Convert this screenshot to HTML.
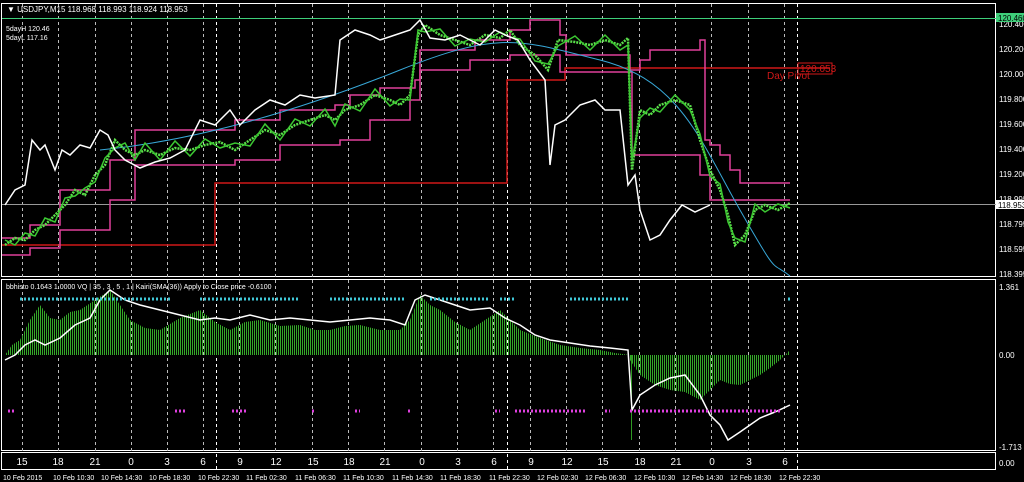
<!DOCTYPE html>
<html><head><meta charset="utf-8"><style>
body{margin:0;background:#000;width:1024px;height:482px;overflow:hidden;font-family:"Liberation Sans",sans-serif}
svg{display:block}
text{font-family:"Liberation Sans",sans-serif}
</style></head><body>
<svg width="1024" height="482" viewBox="0 0 1024 482">
<defs>
<pattern id="st" width="2" height="4" patternUnits="userSpaceOnUse"><rect x="0" y="0" width="1" height="4" fill="#34a828"/></pattern>
</defs>
<rect width="1024" height="482" fill="#000"/>
<rect x="1.5" y="3.5" width="994" height="273" fill="none" stroke="#fff"/>
<rect x="1.5" y="279.5" width="994" height="171" fill="none" stroke="#fff"/>
<rect x="1.5" y="452.5" width="994" height="17" fill="none" stroke="#fff"/>
<g stroke="#bbb" stroke-dasharray="3,3" stroke-width="1">
<path d="M22.5 4V452M58.5 4V452M95.5 4V452M131.5 4V452M167.5 4V452M203.5 4V452M239.5 4V452M275.5 4V452M312.5 4V452M348.5 4V452M384.5 4V452M421.5 4V452M457.5 4V452M493.5 4V452M530.5 4V452M566.5 4V452M602.5 4V452M639.5 4V452M675.5 4V452M711.5 4V452M748.5 4V452M784.5 4V452"/>
</g>
<g stroke="#fff" stroke-dasharray="3,3" stroke-width="1"><path d="M216.5 4V470M507.5 4V470M797.5 4V470"/></g>
<line x1="2" y1="18.5" x2="996" y2="18.5" stroke="#3ecf7a"/>
<line x1="2" y1="204.5" x2="996" y2="204.5" stroke="#999"/>
<path d="M2 245H215V183H507V80H565V68H830" fill="none" stroke="#d01818" stroke-width="1.5"/>
<rect x="798" y="63" width="34" height="11" fill="none" stroke="#d01818"/>
<text x="800" y="72" font-size="10" fill="#d01818">120.053</text>
<text x="767" y="79" font-size="10" fill="#d01818">Day Pivot</text>
<path d="M2 238H30V225H60V190H110V160H135V130H235V120H280V110H335V105H350V95H380V88H415V80H420V50H475V40H510V30H530V20H560V35H566V55H630V70H640V60H650V50H700V40H705V140H710V145H720V155H730V170H740V183H790" fill="none" stroke="#e0409a" stroke-width="1.5"/>
<path d="M2 255H30V248H60V230H110V200H135V165H235V160H280V145H340V140H370V120H410V100H420V70H470V60H510V55H560V72H632V155H700V175H710V200H790" fill="none" stroke="#e0409a" stroke-width="1.5"/>
<path d="M100 150C200 140 300 110 400 70S520 40 600 60S700 140 740 210S770 260 790 276" fill="none" stroke="#38a8d8" stroke-width="1"/>
<path d="M5 245L15 238 25 240 35 230 45 225 55 215 65 205 75 190 85 195 95 175 105 165 115 140 125 150 135 155 145 150 160 155 175 148 190 150 205 145 220 142 235 150 250 140 265 130 280 135 295 125 310 120 325 115 335 120 345 110 360 105 375 95 390 100 400 105 410 95 418 35 425 25 440 35 455 40 470 45 485 35 500 38 510 30 520 45 535 55 548 70 558 40 575 42 590 45 605 40 620 45 628 38 632 170 640 110 650 115 660 105 675 100 690 105 700 140 710 170 720 190 728 215 735 245 745 235 755 210 765 205 778 210 790 203" fill="none" stroke="#5ae04a" stroke-width="2.5" stroke-dasharray="2,1"/>
<path d="M5 240L15 245 25 233 35 236 45 218 55 222 65 198 75 196 85 188 95 182 105 158 115 148 125 143 135 160 145 143 160 160 175 141 190 156 205 139 220 148 235 143 250 146 265 124 280 140 295 119 310 126 325 109 335 126 345 104 360 111 375 89 390 106 400 99 410 100 418 30 425 32 440 29 455 46 470 39 485 42 500 32 510 37 520 39 535 61 548 64 558 46 575 36 590 50 605 35 620 50 628 45 632 160 640 118 650 108 660 112 675 95 690 110 700 134 710 176 720 184 728 222 735 238 745 242 755 204 765 212 778 204 790 208" fill="none" stroke="#3cc832" stroke-width="1.5"/>
<path d="M5 205L15 190 25 185 32 140 40 150 45 145 55 170 62 150 70 155 80 145 90 148 100 130 108 135 115 150 125 160 140 168 155 162 170 158 185 150 200 120 215 125 230 110 240 125 255 110 270 100 285 105 300 95 315 98 335 95 340 40 355 30 370 35 380 40 395 35 410 30 420 20 430 38 445 40 460 35 480 45 495 30 505 35 518 40 530 60 545 80 550 165 555 125 565 120 580 105 595 100 605 110 620 110 628 185 635 175 640 210 650 240 660 235 670 220 682 205 695 212 710 205" fill="none" stroke="#fff" stroke-width="1.5"/>
<text x="7" y="12" font-size="8" fill="#fff">▼ USDJPY,M15  118.968 118.993 118.924 118.953</text>
<text x="6" y="31" font-size="7" fill="#fff">5dayH 120.46</text>
<text x="6" y="40" font-size="7" fill="#fff">5dayL 117.16</text>
<g font-size="8" fill="#fff">
<text x="999" y="27">120.400</text><text x="999" y="52">120.200</text><text x="999" y="77">120.000</text>
<text x="999" y="102">119.800</text><text x="999" y="127">119.600</text><text x="999" y="152">119.400</text>
<text x="999" y="177">119.200</text><text x="999" y="202">118.995</text><text x="999" y="227">118.795</text>
<text x="999" y="252">118.595</text><text x="999" y="277">118.395</text>
<text x="999" y="290">1.361</text><text x="999" y="358">0.00</text><text x="999" y="450">-1.713</text><text x="999" y="466">0.00</text>
</g>
<rect x="996" y="13" width="28" height="9" fill="#3ecf7a"/><text x="998" y="21" font-size="8" fill="#000">120.460</text>
<rect x="996" y="200" width="28" height="9" fill="#fff"/><text x="998" y="208" font-size="8" fill="#000">118.953</text>
<text x="6" y="289" font-size="7" fill="#fff">bbhisto 0.1643 1.0000  VQ | 35 , 3 , 5 , 1  |  Kairi(SMA(36)) Apply to Close price -0.6100</text>
<polygon points="5,355 12,345 20,340 30,320 40,305 50,318 60,320 70,312 80,310 95,300 110,290 120,305 130,320 145,328 160,330 180,318 200,310 215,322 230,330 245,322 260,320 280,326 300,325 315,330 330,330 345,326 360,325 380,330 400,330 410,320 420,295 430,305 440,310 455,322 470,330 485,320 500,310 510,320 520,330 540,338 560,345 580,348 600,350 615,353 630,355 630,360 640,375 655,385 670,390 685,392 700,400 710,390 720,380 730,384 740,385 750,380 760,375 770,368 780,360 790,350 790,355" fill="url(#st)"/>
<line x1="631.5" y1="355" x2="631.5" y2="440" stroke="#2e9a22"/>
<path d="M5 360L15 355 25 345 35 340 45 345 60 338 75 325 90 318 100 300 110 290 125 300 140 305 160 310 180 315 200 320 215 318 230 320 250 315 270 320 290 318 310 320 330 322 350 320 370 318 390 320 405 325 415 300 425 295 440 300 455 305 470 310 490 308 505 318 520 325 535 335 550 340 570 343 590 346 610 348 628 350 632 410 640 395 655 385 670 378 685 375 700 395 710 415 720 425 728 440 740 432 750 425 760 418 775 412 790 405" fill="none" stroke="#fff" stroke-width="1.5"/>
<g stroke="#40c8d8" stroke-width="3" stroke-dasharray="2,2">
<path d="M20 299H170M200 299H300M330 299H405M430 299H490M500 299H515M570 299H630M788 299H792"/>
</g>
<g stroke="#e040e0" stroke-width="3" stroke-dasharray="2,2">
<path d="M8 411H14M175 411H186M232 411H248M312 411H316M355 411H360M408 411H412M495 411H500M515 411H585M605 411H610M630 411H780"/>
</g>
<g font-size="10" fill="#fff" text-anchor="middle">
<text x="22" y="465">15</text><text x="58" y="465">18</text><text x="95" y="465">21</text><text x="131" y="465">0</text><text x="167" y="465">3</text><text x="203" y="465">6</text><text x="240" y="465">9</text><text x="276" y="465">12</text><text x="313" y="465">15</text><text x="349" y="465">18</text><text x="385" y="465">21</text><text x="422" y="465">0</text><text x="458" y="465">3</text><text x="494" y="465">6</text><text x="531" y="465">9</text><text x="567" y="465">12</text><text x="603" y="465">15</text><text x="640" y="465">18</text><text x="676" y="465">21</text><text x="712" y="465">0</text><text x="749" y="465">3</text><text x="785" y="465">6</text>
</g>
<g font-size="7" fill="#fff">
<text x="3" y="480">10 Feb 2015</text><text x="53" y="480">10 Feb 10:30</text><text x="101" y="480">10 Feb 14:30</text><text x="149" y="480">10 Feb 18:30</text><text x="198" y="480">10 Feb 22:30</text><text x="246" y="480">11 Feb 02:30</text><text x="295" y="480">11 Feb 06:30</text><text x="343" y="480">11 Feb 10:30</text><text x="392" y="480">11 Feb 14:30</text><text x="440" y="480">11 Feb 18:30</text><text x="489" y="480">11 Feb 22:30</text><text x="537" y="480">12 Feb 02:30</text><text x="585" y="480">12 Feb 06:30</text><text x="634" y="480">12 Feb 10:30</text><text x="682" y="480">12 Feb 14:30</text><text x="730" y="480">12 Feb 18:30</text><text x="779" y="480">12 Feb 22:30</text>
</g>
</svg>
</body></html>
